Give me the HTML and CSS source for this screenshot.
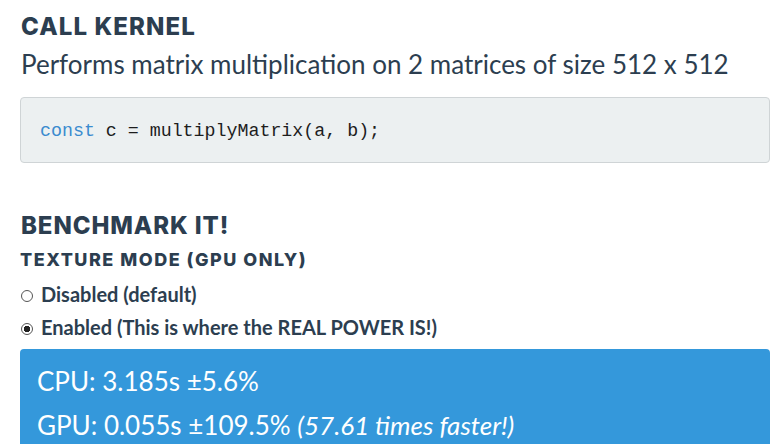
FILE: index.html
```html
<!DOCTYPE html>
<html lang="en">
<head>
<meta charset="utf-8">
<title>Call kernel</title>
<link rel="stylesheet" href="styles.css">
</head>
<body>
<main class="page">
  <h2 class="heading">CALL KERNEL</h2>
  <p class="lead">Performs matrix multiplication on 2 matrices of size 512 x 512</p>
  <pre class="code"><span class="kw">const</span> c = multiplyMatrix(a, b);</pre>

  <h2 class="heading heading-bench">BENCHMARK IT!</h2>
  <h3 class="subheading">TEXTURE MODE (GPU ONLY)</h3>
  <label class="option"><input type="radio" name="mode" class="radio"> Disabled (default)</label>
  <label class="option"><input type="radio" name="mode" class="radio" checked> Enabled (This is where the REAL POWER IS!)</label>

  <div class="result">
    <p class="result-line">CPU: 3.185s ±5.6%</p>
    <p class="result-line">GPU: 0.055s ±109.5% <em>(57.61 times faster!)</em></p>
  </div>
</main>
</body>
</html>
```
FILE: styles.css
```css
* { box-sizing: border-box; }
html, body { margin: 0; padding: 0; background: #fff; }
body {
  color: #2c3e50;
  font-family: "Lato", "Open Sans", sans-serif;
  overflow: hidden;
}
.page {
  padding: 0 11px 0 20px;
  display: flex;
  flex-direction: column;
  align-items: stretch;
}
.heading {
  margin: 12px 0 0 1px;
  font-family: "Inter", "Liberation Sans", sans-serif;
  font-weight: 800;
  font-size: 24px;
  line-height: 30px;
  letter-spacing: 1.1px;
}
.lead {
  margin: 7px 0 0 1px;
  font-size: 26px;
  line-height: 30px;
}
.code {
  margin: 18px 0 0 0;
  padding: 21px 19px 19px;
  background: #ecf0f1;
  border: 1px solid #cfd4d6;
  border-radius: 4px;
  font-family: "Liberation Mono", "DejaVu Sans Mono", monospace;
  font-size: 18.3px;
  line-height: 24px;
  color: #1d1d1d;
}
.kw { color: #3a8bcf; }
.heading-bench { margin-top: 48px; letter-spacing: 0.9px; }
.subheading {
  margin: 8px 0 0 0;
  font-family: "Inter", "Liberation Sans", sans-serif;
  font-weight: 800;
  font-size: 18px;
  line-height: 22px;
  letter-spacing: 1.5px;
}
.option {
  display: flex;
  align-items: center;
  gap: 8px;
  font-weight: 700;
  font-size: 20px;
  line-height: 33px;
  margin-left: 1px;
}
.option:first-of-type { margin-top: 7px; }
.radio {
  appearance: none;
  -webkit-appearance: none;
  margin: 0;
  width: 12px;
  height: 12px;
  border: 1px solid #555;
  border-radius: 50%;
  background: #fff;
  flex: none;
  position: relative;
  top: 1px;
}
.radio:checked {
  background: radial-gradient(circle, #222 0 3px, #fff 3.5px);
}
.result {
  margin-top: 5px;
  background: #3498db;
  border-radius: 4px 4px 0 0;
  padding: 10px 17px 0;
  color: #fff;
}
.result-line {
  margin: 0;
  font-size: 26px;
  line-height: 44px;
  font-weight: 400;
}
.result-line em { font-style: italic; }
```
